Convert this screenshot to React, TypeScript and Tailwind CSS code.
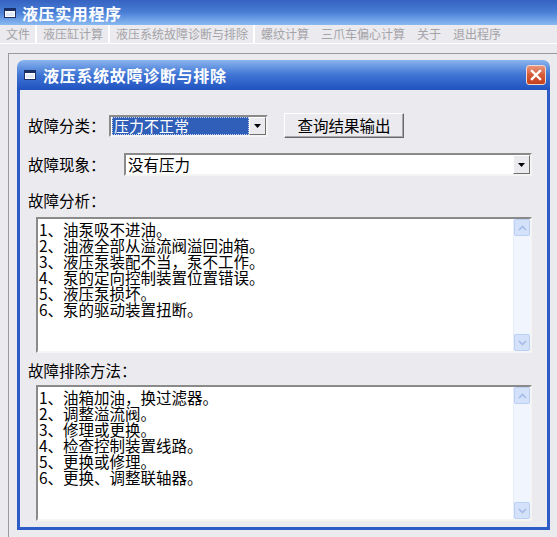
import React from "react";

const cjk = "font-['Noto_Sans_CJK_SC','Noto_Sans',sans-serif]";

const menus = ["文件", "液压缸计算", "液压系统故障诊断与排除", "螺纹计算", "三爪车偏心计算", "关于", "退出程序"];

const analysis = [
  "1、油泵吸不进油。",
  "2、油液全部从溢流阀溢回油箱。",
  "3、液压泵装配不当，泵不工作。",
  "4、泵的定向控制装置位置错误。",
  "5、液压泵损坏。",
  "6、泵的驱动装置扭断。",
];

const remedies = [
  "1、油箱加油，换过滤器。",
  "2、调整溢流阀。",
  "3、修理或更换。",
  "4、检查控制装置线路。",
  "5、更换或修理。",
  "6、更换、调整联轴器。",
];

function WinIcon({ className }: { className?: string }) {
  return (
    <svg width="12" height="10" viewBox="0 0 12 10" className={className}>
      <rect x="0.5" y="0.5" width="11" height="9" fill="#ffffff" stroke="#1b2f66" />
      <rect x="0.5" y="0.5" width="11" height="2.5" fill="#1b2f66" />
      <rect x="2" y="4.5" width="8" height="3.5" fill="#dfe8f8" />
    </svg>
  );
}

function DropButton() {
  return (
    <div className="w-[17px] h-full bg-[#ebeaee] border border-t-white border-l-white border-b-[#6f6f6f] border-r-[#6f6f6f] flex items-center justify-center">
      <svg width="7" height="4" viewBox="0 0 7 4">
        <path d="M0 0h7L3.5 4z" fill="#000" />
      </svg>
    </div>
  );
}

function ScrollArrow({ up }: { up?: boolean }) {
  return (
    <div className="h-[17px] bg-[#d4e1fb] border border-[#bcd0f4] rounded-[2px] flex items-center justify-center">
      <svg width="9" height="6" viewBox="0 0 9 6">
        <path d={up ? "M1 5l3.5-3.5L8 5" : "M1 1l3.5 3.5L8 1"} fill="none" stroke="#a5bde6" strokeWidth="1.6" />
      </svg>
    </div>
  );
}

function TextBox({ lines }: { lines: string[] }) {
  return (
    <div className="w-[496px] h-[136px] flex bg-white border-2 border-t-[#8a8a8a] border-l-[#8a8a8a] border-b-[#f4f4f4] border-r-[#f4f4f4]">
      <div className="flex-1 pl-[1px] pt-[2px] text-[15.5px] leading-[16px] text-black">
        {lines.map((l) => (
          <div key={l} className="h-[16px] whitespace-nowrap">{l}</div>
        ))}
      </div>
      <div className="w-[17px] flex flex-col bg-[#f1f5fd] border-l border-[#e6edfb]">
        <ScrollArrow up />
        <div className="flex-1" />
        <ScrollArrow />
      </div>
    </div>
  );
}

export default function App() {
  return (
    <div className={`w-[557px] h-[537px] overflow-hidden bg-[#ebeaee] flex flex-col ${cjk}`}>
      {/* main window caption */}
      <div className="h-[25px] shrink-0 bg-gradient-to-b from-[#3562c2] via-[#4a7fd6] to-[#8bbaf1] flex items-center pl-[4px]">
        <WinIcon />
        <span className="ml-[6px] text-white font-bold text-[16px] tracking-[0.6px] leading-none">液压实用程序</span>
      </div>

      {/* menu bar */}
      <div className="h-[18px] shrink-0 flex items-stretch text-[12px] text-[#a4a3a8] leading-[18px]">
        {menus.map((m, i) => (
          <div
            key={m}
            className={`pl-[6px] pr-[5px] ${i < 3 ? "border-r-2 border-white" : "pr-[6px]"}`}
          >
            {m}
          </div>
        ))}
      </div>
      <div className="h-[10px] shrink-0 border-t border-white" />

      {/* MDI client area */}
      <div className="flex-1 ml-[8px] border-t border-l border-[#9a9a9c] pl-[8px] pt-[6px]">
        <div className="w-[533px] h-[470px] flex flex-col rounded-t-[7px] overflow-hidden">
          <div className="h-[30px] shrink-0 bg-gradient-to-b from-[#8ab4ee] via-[#3f74d4] to-[#2152c0] flex items-center pl-[7px] pr-[4px]">
            <WinIcon />
            <span className="ml-[7px] text-white font-bold text-[16px] tracking-[0.7px] leading-none">
              液压系统故障诊断与排除
            </span>
            <div className="ml-auto w-[20px] h-[20px] rounded-[3px] border border-[#f3d6cc] bg-gradient-to-b from-[#e9957a] via-[#d65a36] to-[#c4401c] flex items-center justify-center">
              <svg width="12" height="12" viewBox="0 0 12 12">
                <path d="M2 2l8 8M10 2l-8 8" stroke="#fff" strokeWidth="2.4" strokeLinecap="square" />
              </svg>
            </div>
          </div>

          <div className="flex-1 bg-[#ebeaee] border-x-[3px] border-b-[3px] border-[#2e5cc7] text-[15.5px] text-black">
            {/* fault category */}
            <div className="mt-[23px] h-[25px] flex items-center pl-[8px]">
              <span className="w-[81px]">故障分类：</span>
              <div className="w-[159px] h-[22px] flex bg-white border-2 border-t-[#8a8a8a] border-l-[#8a8a8a] border-b-[#f4f4f4] border-r-[#f4f4f4]">
                <div className="flex-1 pl-[1px]">
                  <div className="h-full w-[137px] flex items-center bg-[#2f5fb8] border border-dotted border-[#c9d4ea] text-white text-[15px] leading-none pl-[1px] whitespace-nowrap">
                    压力不正常
                  </div>
                </div>
                <DropButton />
              </div>
              <button className="ml-[16px] w-[120px] h-[25px] bg-[#ebeaee] border border-t-white border-l-white border-b-[#6a6a6a] border-r-[#6a6a6a] shadow-[inset_-1px_-1px_0_#a9a9ab] text-[15.5px] leading-none">
                查询结果输出
              </button>
            </div>

            {/* symptom */}
            <div className="mt-[15px] h-[23px] flex items-center pl-[8px]">
              <span className="w-[96px]">故障现象：</span>
              <div className="w-[408px] h-[23px] flex bg-white border-2 border-t-[#8a8a8a] border-l-[#8a8a8a] border-b-[#f4f4f4] border-r-[#f4f4f4]">
                <div className="flex-1 pl-[2px] leading-[18px]">没有压力</div>
                <DropButton />
              </div>
            </div>

            <div className="mt-[14px] h-[20px] leading-[20px] pl-[8px]">故障分析：</div>
            <div className="mt-[7px] pl-[16px]">
              <TextBox lines={analysis} />
            </div>

            <div className="mt-[7px] h-[20px] leading-[20px] pl-[8px]">故障排除方法：</div>
            <div className="mt-[5px] pl-[16px]">
              <TextBox lines={remedies} />
            </div>
          </div>
        </div>
      </div>
    </div>
  );
}
